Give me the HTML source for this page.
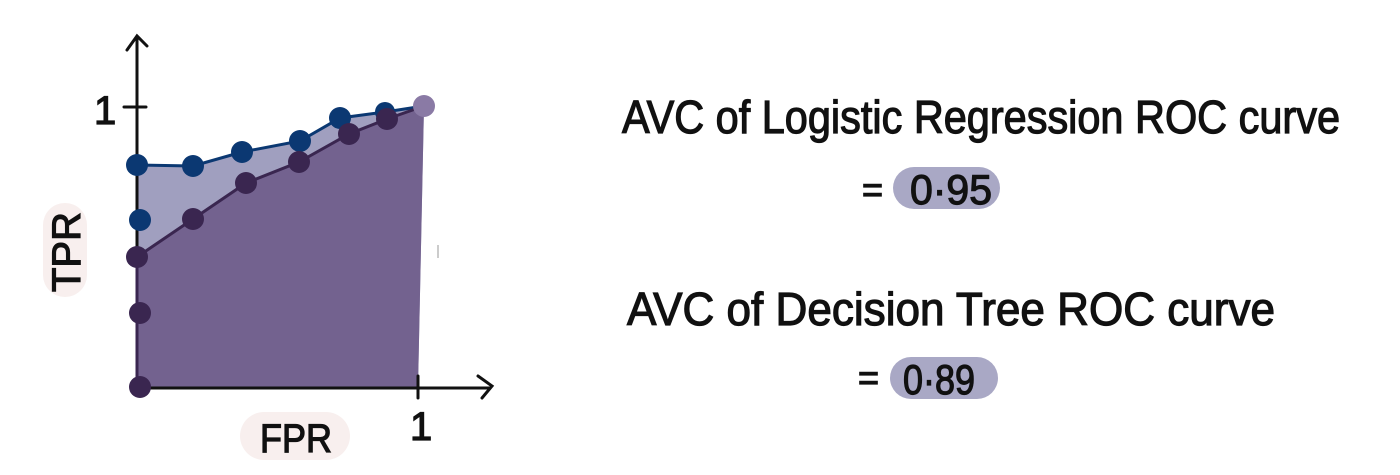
<!DOCTYPE html>
<html><head><style>
html,body{margin:0;padding:0;background:#fff;width:1400px;height:475px;overflow:hidden}
svg{display:block}
text{font-family:"Liberation Sans",sans-serif;fill:#111;stroke:#111;stroke-width:1.2}
</style></head><body>
<svg width="1400" height="475" viewBox="0 0 1400 475">
<polygon points="137,165 193,166 242,152 300,141 340,118 385,112 424,106 418,388 137,388" fill="#a09fbf"/>
<polygon points="137,257 193,219 246,183 299,162 349,134 387,119 424,106 418,388 137,388" fill="#73628f"/>
<g stroke="#111" stroke-width="3" fill="none" stroke-linecap="round">
<line x1="137" y1="38" x2="137" y2="388"/>
<polyline points="127,50 137,36 147,46"/>
<line x1="137" y1="388" x2="490" y2="388"/>
<polyline points="478,376 492,386 482,398"/>
<line x1="124" y1="107" x2="146" y2="107"/>
<line x1="418" y1="376" x2="418" y2="398"/>
</g>
<polyline points="137,165 193,166 242,152 300,141 340,118 385,112 424,106" fill="none" stroke="#0b3872" stroke-width="3"/>
<polyline points="137,388 137,257 193,219 246,183 299,162 349,134 387,119 424,106" fill="none" stroke="#3a2650" stroke-width="3"/>
<g fill="#0b3872">
<circle cx="137" cy="165" r="11"/><circle cx="193" cy="166" r="11"/><circle cx="242" cy="152" r="11"/><circle cx="300" cy="141" r="11"/><circle cx="340" cy="118" r="11"/><circle cx="385" cy="112" r="10"/><circle cx="140" cy="220" r="11"/>
</g>
<g fill="#3a2650">
<circle cx="137" cy="257" r="11"/><circle cx="193" cy="219" r="11"/><circle cx="246" cy="183" r="11"/><circle cx="299" cy="162" r="11"/><circle cx="349" cy="134" r="11"/><circle cx="387" cy="119" r="11"/><circle cx="140" cy="313" r="11"/><circle cx="140" cy="387" r="11"/>
</g>
<circle cx="424" cy="106" r="11" fill="#8a7aa5"/>
<line x1="438" y1="245" x2="438" y2="258" stroke="#ccc" stroke-width="2"/>
<text x="94" y="124" font-size="40">1</text>
<text x="410" y="440" font-size="40">1</text>
<rect x="43" y="203" width="44" height="94" rx="22" fill="#f8efee"/>
<text transform="translate(80,292) rotate(-90)" font-size="40" textLength="80" lengthAdjust="spacingAndGlyphs">TPR</text>
<rect x="240" y="412" width="110" height="48" rx="24" fill="#f8efee"/>
<text x="260" y="452" font-size="40" textLength="72" lengthAdjust="spacingAndGlyphs">FPR</text>
<text x="622" y="133" font-size="46" textLength="718" lengthAdjust="spacingAndGlyphs">AVC of Logistic Regression ROC curve</text>
<text x="627" y="325" font-size="46" textLength="648" lengthAdjust="spacingAndGlyphs">AVC of Decision Tree ROC curve</text>
<text x="862" y="202" font-size="36">=</text>
<text x="858" y="390" font-size="36">=</text>
<rect x="893" y="167" width="107" height="42" rx="21" fill="#a9a8c5"/>
<rect x="890" y="357" width="108" height="42" rx="21" fill="#a9a8c5"/>
<text x="910" y="204" font-size="42" textLength="82" lengthAdjust="spacingAndGlyphs">0·95</text>
<text x="903" y="394" font-size="42" textLength="72" lengthAdjust="spacingAndGlyphs">0·89</text>
</svg>
</body></html>
